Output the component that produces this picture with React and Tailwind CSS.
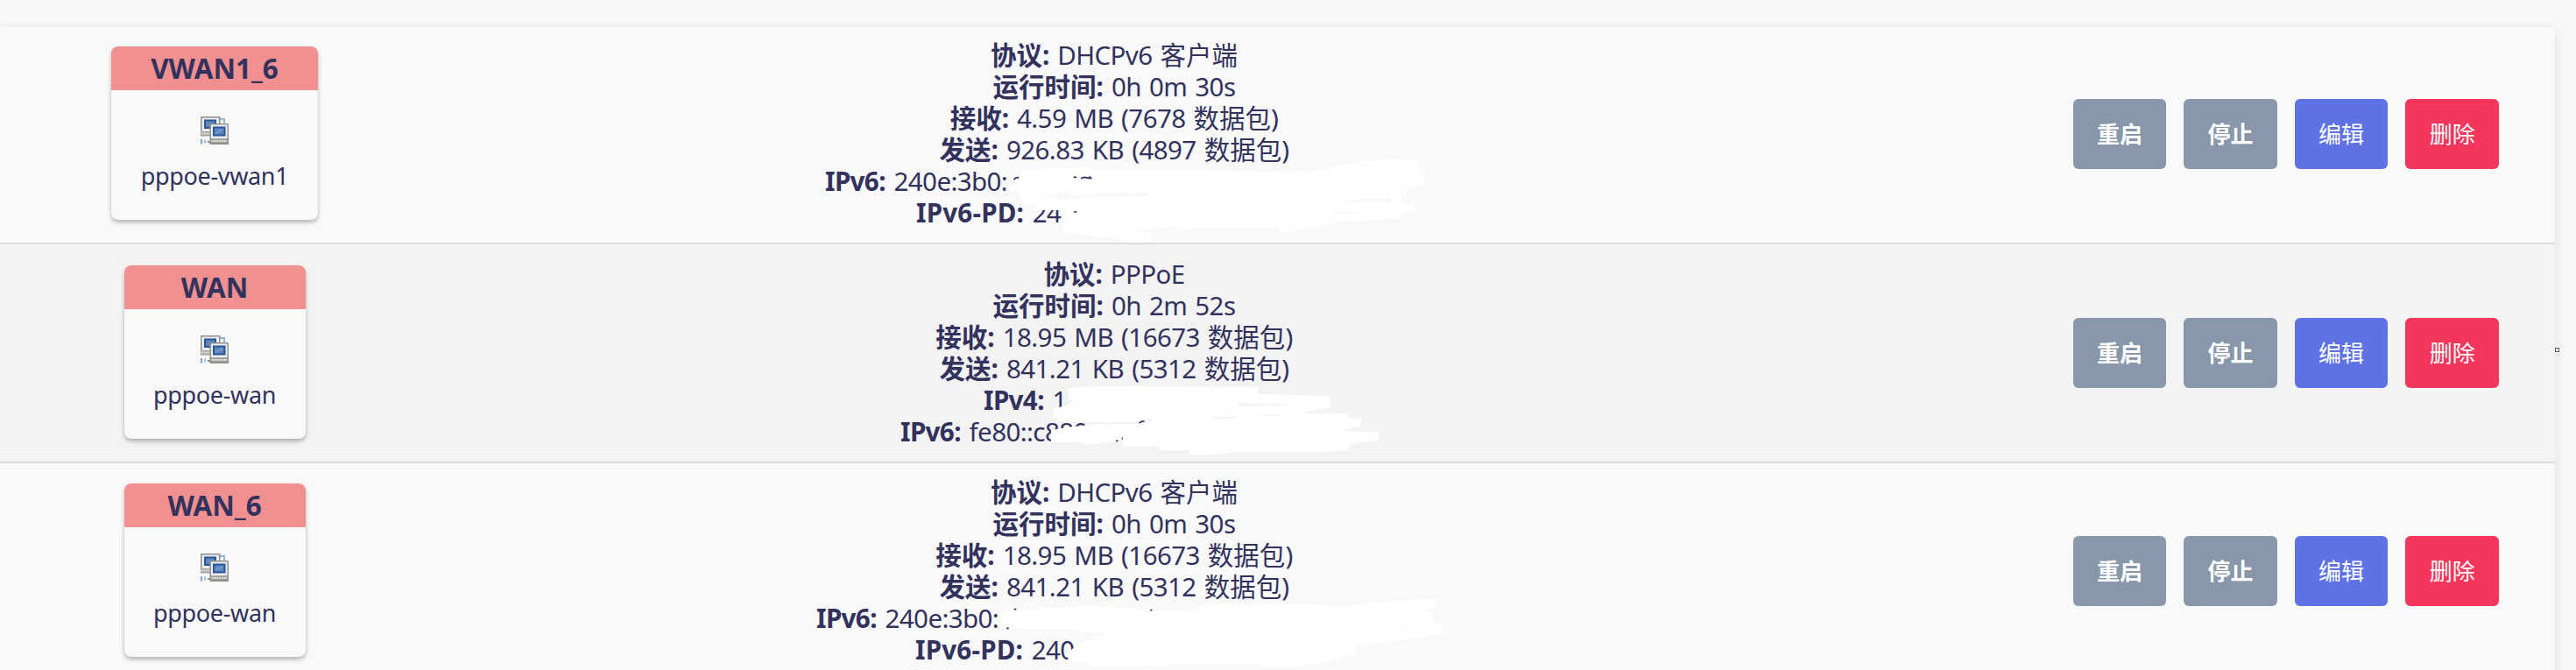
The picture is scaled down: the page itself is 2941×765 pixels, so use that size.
const CJK = /([\u4e00-\u9fff]+)/;

// Latin runs are set a little tighter than the Chinese ones
const Mixed = ({ text, className = 'tracking-[-0.02em]' }) =>
  text.split(CJK).map((part, i) =>
    CJK.test(part) ? (
      <span key={i}>{part}</span>
    ) : (
      <span key={i} className={className}>{part}</span>
    )
  );

const interfaces = [
  {
    name: 'VWAN1_6',
    device: 'pppoe-vwan1',
    cardWidth: 'w-[236px]',
    rowClass: 'h-[248px] bg-[#f9f9f9]',
    lines: [
      ['协议:', 'DHCPv6 客户端'],
      ['运行时间:', '0h 0m 30s'],
      ['接收:', '4.59 MB (7678 数据包)'],
      ['发送:', '926.83 KB (4897 数据包)'],
      ['IPv6:', '240e:3b0:', 'w-[660px]'],
      ['IPv6-PD:', '24', 'w-[452px]'],
    ],
    mask: {
      className: 'left-[1130px] top-[144px] h-[105px] w-[510px]',
      viewBox: '0 0 1530 315',
      d: 'M50 125 L105 102 L108 62 L150 55 L230 50 L330 50 L380 56 L700 57 L1030 66 L1145 58 L1200 42 L1255 30 L1370 23 L1466 24 V53 H1485 V107 L1430 120 L1425 140 L1410 143 V170 L1455 171 V200 L1410 205 L1405 225 L1200 232 L1060 262 L1040 268 H985 V253 L700 253 L685 265 H640 V250 L500 264 L552 274 V305 L470 303 L440 293 L360 285 L250 266 V195 L152 195 V178 L107 170 L105 132 Z',
      gaps: 'M175 147 L270 132 L275 144 L380 137 L546 136 V146 L400 148 L270 158 Z M1200 168 L1290 152 L1378 155 V168 Z M1170 203 L1280 202 V206 L1170 207 Z M365 250 L388 246 V252 L365 255 Z',
      marks: 'M82 90 L90 84 L100 83 M287 82 H297 M312 86 L325 82 L342 86 M342 79 V85 H350 M288 201 H298',
      gapColor: '#f9f9f9',
    },
  },
  {
    name: 'WAN',
    device: 'pppoe-wan',
    cardWidth: 'w-[207px]',
    rowClass: 'h-[250px] pt-[2px] bg-[#f3f3f3]',
    lines: [
      ['协议:', 'PPPoE'],
      ['运行时间:', '0h 2m 52s'],
      ['接收:', '18.95 MB (16673 数据包)'],
      ['发送:', '841.21 KB (5312 数据包)'],
      ['IPv4:', '1', 'w-[298px]'],
      ['IPv6:', 'fe80::c880', 'w-[488px]'],
    ],
    mask: {
      className: 'left-[1170px] top-[156px] h-[95px] w-[440px]',
      viewBox: '0 0 1320 285',
      d: 'M150 25 L230 18 L800 20 V45 L1047 52 V90 L940 111 H1107 V126 L1152 128 V155 L1080 172 L1212 175 V203 L1140 212 L1113 218 V236 L1020 244 L730 243 L660 251 H564 V237 H459 V224 H336 V196 L310 206 L270 213 L230 218 L195 215 L190 209 H90 V168 L150 158 L240 148 L380 147 L412 138 L435 138 V130 H408 L385 140 L300 143 L225 140 L115 138 V127 H97 V95 L150 82 L170 62 L150 62 Z',
      gaps: 'M735 76 L905 80 V84 L735 86 Z M645 124 L725 122 V127 L645 130 Z M805 117 H888 V120 H805 Z',
      marks: 'M392 144 L402 138 L410 139 M312 205 H319 M332 197 H336',
      gapColor: '#f3f3f3',
    },
  },
  {
    name: 'WAN_6',
    device: 'pppoe-wan',
    cardWidth: 'w-[207px]',
    rowClass: 'h-[250px] pt-px bg-[#f9f9f9]',
    lines: [
      ['协议:', 'DHCPv6 客户端'],
      ['运行时间:', '0h 0m 30s'],
      ['接收:', '18.95 MB (16673 数据包)'],
      ['发送:', '841.21 KB (5312 数据包)'],
      ['IPv6:', '240e:3b0:', 'w-[680px]'],
      ['IPv6-PD:', '240', 'w-[454px]'],
    ],
    mask: {
      className: 'left-[1125px] top-[146px] h-[90px] w-[522px]',
      viewBox: '0 0 1566 270',
      d: 'M50 95 L60 70 L230 58 L350 52 L470 57 L560 66 L710 66 L760 46 L1150 47 L1235 54 L1290 43 L1400 35 L1542 25 V55 L1490 68 L1533 72 V105 L1566 112 V145 L1320 183 H1270 V212 L1180 240 L1040 260 H945 L940 252 L720 250 L600 254 L360 257 V245 H283 V210 L320 180 L415 148 L340 138 L270 130 L50 126 V100 Z',
      gaps: 'M1082 76 H1122 V78 H1082 Z M1398 132 L1446 129 V132 L1398 134 Z',
      marks: 'M98 62 H106 M72 127 H80 M565 65 H571',
      gapColor: '#f9f9f9',
    },
  },
];

const NetworkIcon = () => (
  <svg className="h-8 w-8" viewBox="0 0 32 32">
    <path d="M21 3H27V9" fill="none" stroke="#8fb6e2" strokeWidth="2" />
    <rect x="0.75" y="0.75" width="21" height="17" fill="#eceef0" stroke="#8d8e8a" strokeWidth="1.5" />
    <rect x="4" y="3.5" width="14" height="10.5" fill="#2b5797" />
    <rect x="6" y="5.5" width="10" height="6.5" fill="#5c86bd" />
    <rect x="0" y="17" width="12" height="5.5" fill="#a3a49e" />
    <path d="M1 19.5H11" stroke="#e2e3de" strokeWidth="2" strokeDasharray="2 0.7" />
    <rect x="0" y="26" width="2" height="5.5" fill="#77a5da" />
    <rect x="4" y="26.5" width="2" height="4" fill="#9fc0e8" />
    <path d="M8 29H12" stroke="#8d8e8a" strokeWidth="2" />
    <rect x="11.2" y="8.7" width="20" height="17.5" rx="0.5" fill="#eceef0" stroke="#92938f" strokeWidth="1.5" />
    <rect x="14" y="11.5" width="14.5" height="11" fill="#2b5797" />
    <rect x="16" y="13.5" width="10.5" height="7" fill="#5c86bd" />
    <path d="M17 19L25 15" stroke="#7ba0ce" strokeWidth="1.5" />
    <rect x="10.5" y="25.5" width="21.5" height="6.5" fill="#8f918b" />
    <path d="M12.5 28H30.5" stroke="#dcded6" strokeWidth="2.6" strokeDasharray="2.4 0.5" />
  </svg>
);

const InterfaceCard = ({ name, device, width }) => (
  <div className={`${width} h-[198px] overflow-hidden rounded-lg bg-[#f9f9f9] text-center shadow-[0_3px_5px_rgba(0,0,0,0.28)]`}>
    <div className="h-[50px] bg-[#f09090] text-[31.4px] leading-[50px] font-bold">{name}</div>
    <div className="flex flex-col items-center pt-[30px]">
      <NetworkIcon />
      <div className="mt-[14px] text-[27px] leading-[44px] tracking-[-0.012em]">{device}</div>
    </div>
  </div>
);

const buttons = [
  ['重启', 'bg-[#8898aa] font-bold'],
  ['停止', 'bg-[#8898aa] font-bold'],
  ['编辑', 'bg-[#5e72e4]'],
  ['删除', 'bg-[#f5365c]'],
];

const InterfaceRow = ({ item }) => (
  <div className={`relative flex items-start border-b-2 border-[#dddddd] ${item.rowClass}`}>
    <div className="flex w-[490px] justify-center pt-[22px]">
      <InterfaceCard name={item.name} device={item.device} width={item.cardWidth} />
    </div>
    <div className="flex w-[1564px] flex-col items-center pt-[14px] text-[29.5px] leading-[36px] [word-spacing:2px] whitespace-nowrap">
      {item.lines.map(([label, value, width]) => (
        <div key={label} className={width}>
          <strong className="font-bold">
            <Mixed text={label} className={label === 'IPv6-PD:' ? 'tracking-[0.008em]' : 'tracking-[-0.02em]'} />
          </strong>{' '}
          <Mixed text={value} />
        </div>
      ))}
    </div>
    <div className="flex flex-1 justify-end gap-5 pt-[82px] pr-16">
      {buttons.map(([label, color]) => (
        <button key={label} className={`h-20 w-[106.6px] rounded-md text-[26px] text-white ${color}`}>
          {label}
        </button>
      ))}
    </div>
    <svg className={`absolute ${item.mask.className}`} viewBox={item.mask.viewBox}>
      <path d={item.mask.d} fill="#ffffff" />
      <path d={item.mask.gaps} fill={item.mask.gapColor} />
      <path d={item.mask.marks} fill="none" stroke="#32325d" strokeWidth="5" />
    </svg>
  </div>
);

export default function App() {
  return (
    <div className="relative h-[765px] overflow-hidden bg-[#f8f8f8] pt-[31px] font-['Noto_Sans','Noto_Sans_CJK_SC',sans-serif] text-[#32325d]">
      <div className="w-[2917px] shadow-[0_2px_12px_rgba(0,0,0,0.1)]">
        {interfaces.map((item) => (
          <InterfaceRow key={item.name} item={item} />
        ))}
      </div>
      <div className="absolute top-[397px] left-[2917px] h-[5px] w-[5px] border border-[#555555] bg-white" />
    </div>
  );
}
